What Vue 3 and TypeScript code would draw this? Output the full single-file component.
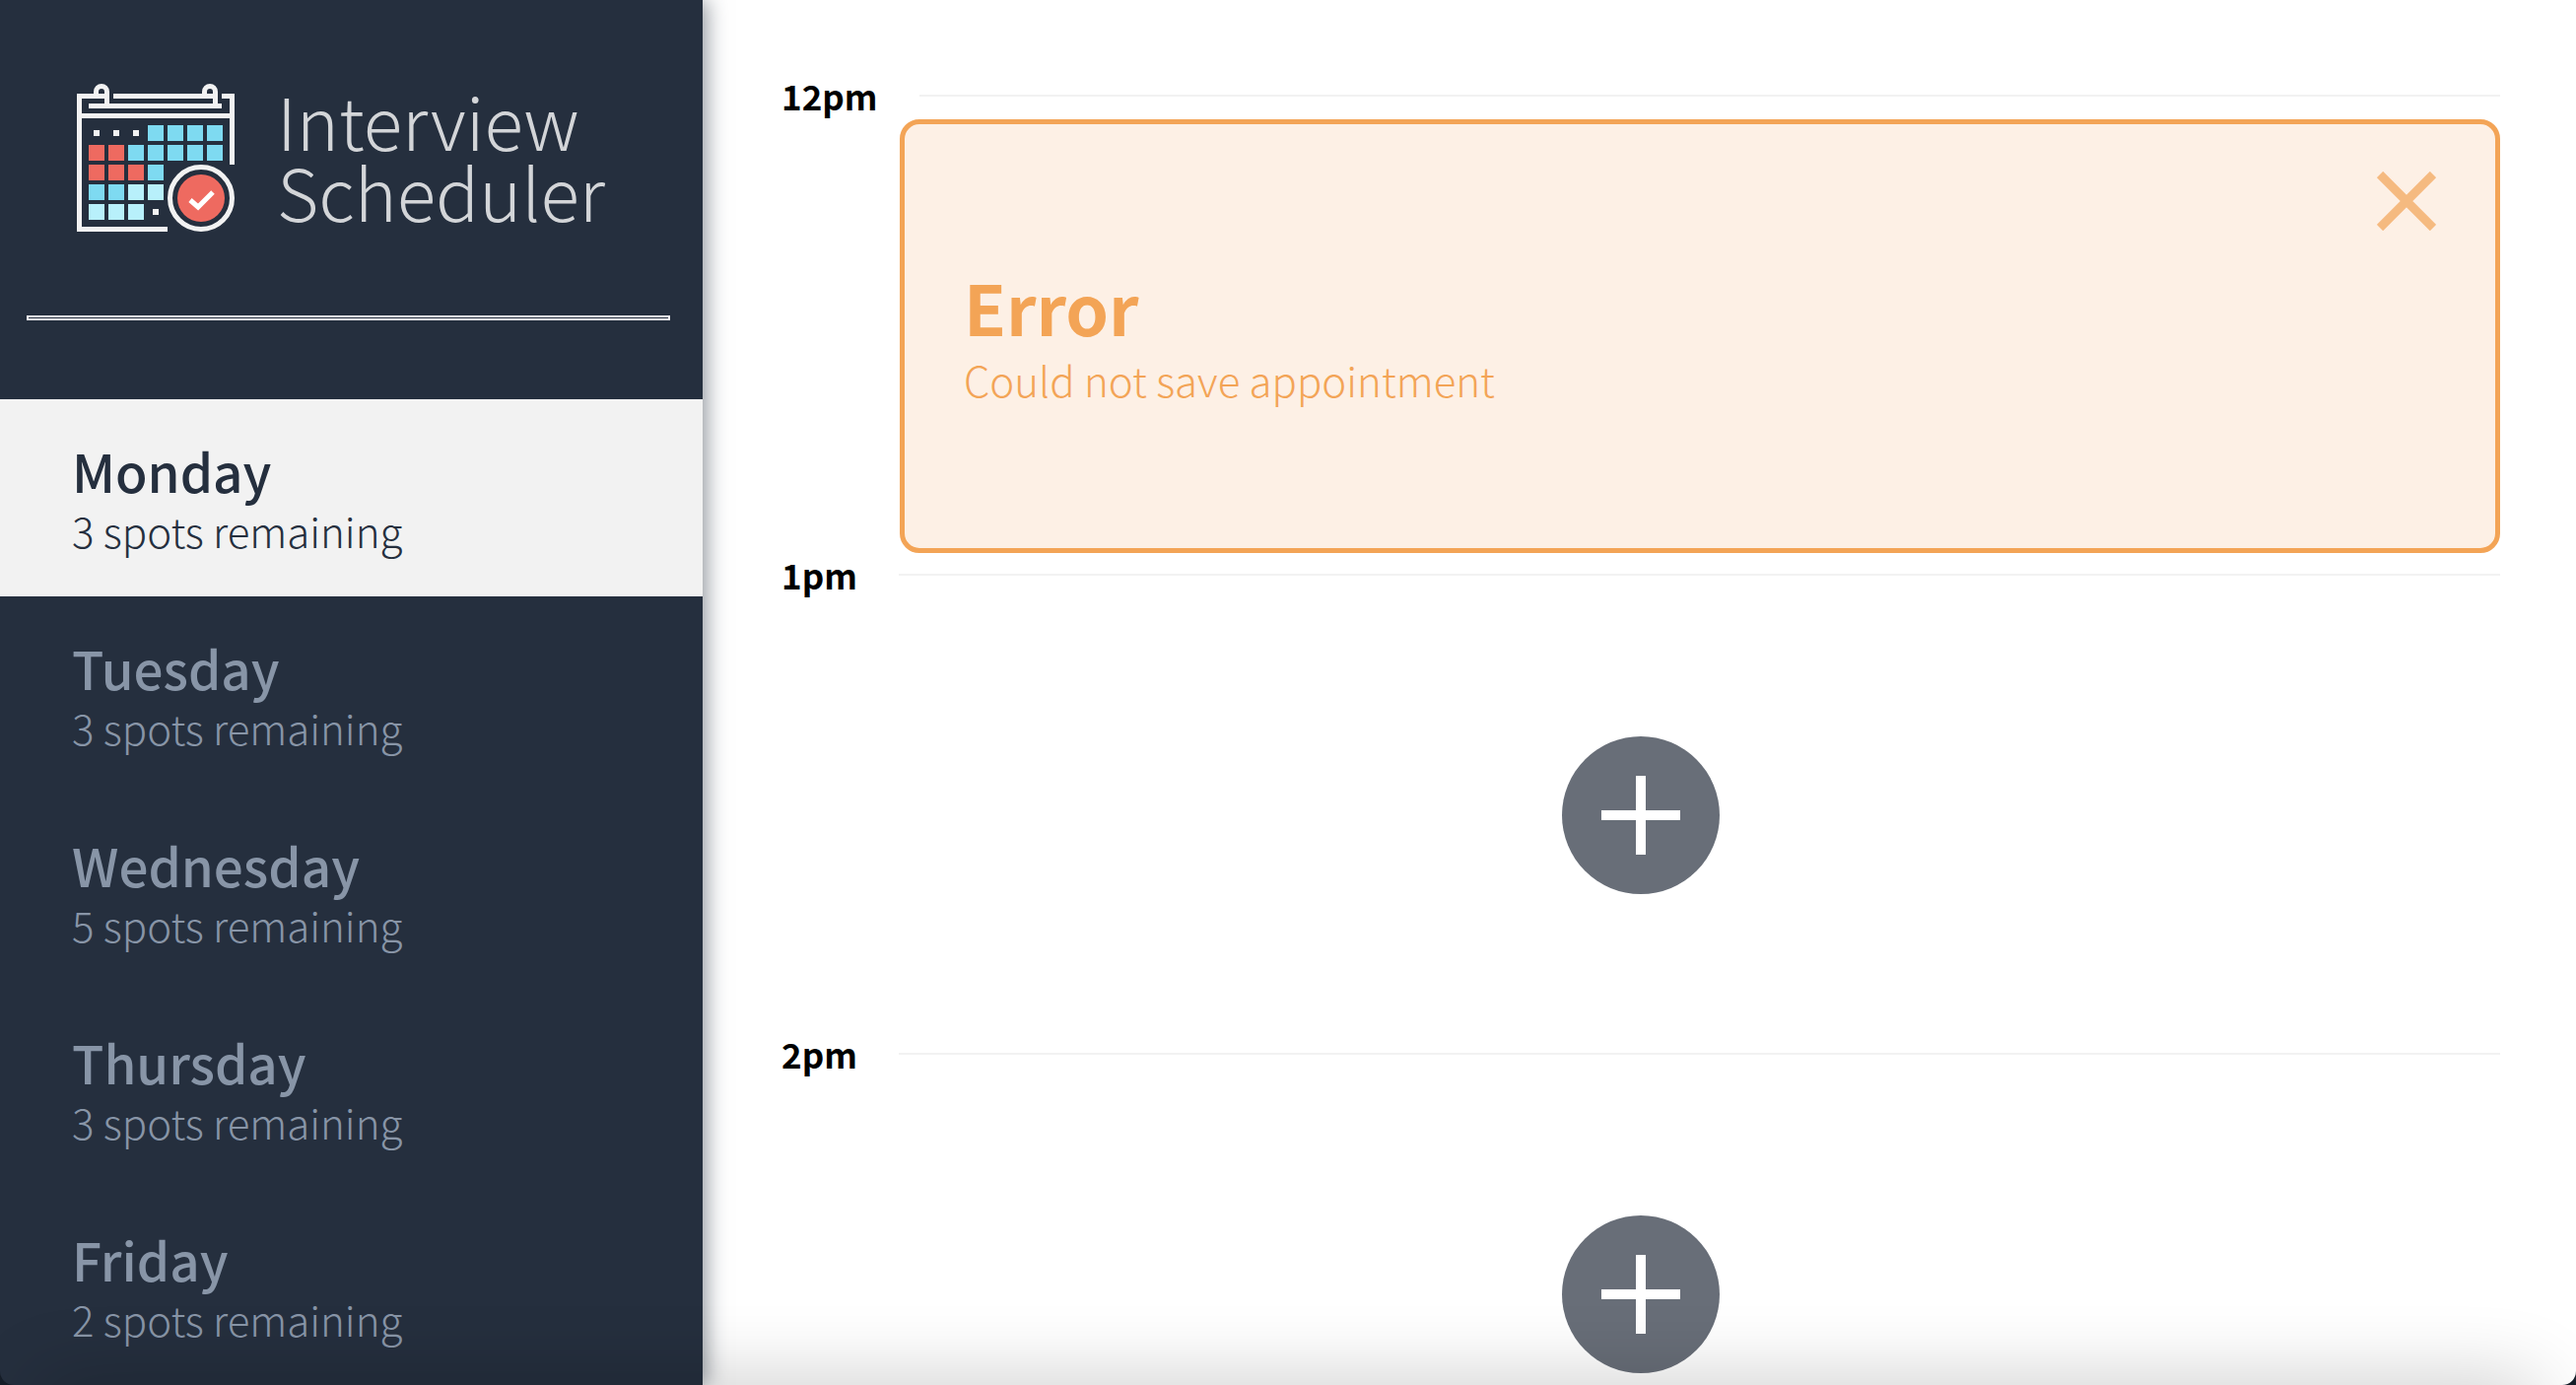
<script setup lang="ts">
import { ref } from 'vue'

interface Day {
  name: string
  spots: number
}

interface Slot {
  time: string
  error: boolean
}

const days: Day[] = [
  { name: 'Monday', spots: 3 },
  { name: 'Tuesday', spots: 3 },
  { name: 'Wednesday', spots: 5 },
  { name: 'Thursday', spots: 3 },
  { name: 'Friday', spots: 2 },
]
const selected = ref('Monday')

const slots = ref<Slot[]>([
  { time: '12pm', error: true },
  { time: '1pm', error: false },
  { time: '2pm', error: false },
])

// Calendar squares of the logo: column, row, tint
const cells: [number, number, string][] = [
  [3, 0, 'sky'], [4, 0, 'sky'], [5, 0, 'sky'], [6, 0, 'sky'],
  [0, 1, 'red'], [1, 1, 'red'], [2, 1, 'sky'], [3, 1, 'sky'], [4, 1, 'sky'], [5, 1, 'sky'], [6, 1, 'sky'],
  [0, 2, 'red'], [1, 2, 'red'], [2, 2, 'red'], [3, 2, 'sky'],
  [0, 3, 'sky'], [1, 3, 'sky'], [2, 3, 'pale'], [3, 3, 'pale'],
  [0, 4, 'pale'], [1, 4, 'pale'], [2, 4, 'pale'],
]
</script>

<template>
  <div class="layout">
    <aside class="sidebar">
      <div class="brand">
        <svg class="brand-icon" viewBox="0 0 160 150" aria-hidden="true">
          <g fill="none" stroke="#f2f2f2" stroke-width="5">
            <path d="M92 147.500H2.500V12.500H20M37 12.500H130M147 12.500H157.500V82" />
            <path d="M12 22.500H147M5 32.500H155" />
            <path d="M30 12.500H19.500V8a5.500 5.500 0 0 1 11 0V22" />
            <path d="M140 12.500H129.500V8a5.500 5.500 0 0 1 11 0V22" />
            <circle cx="126" cy="116" r="31.500" />
          </g>
          <rect
            v-for="[col, row, tint] in cells"
            :key="`${col}-${row}`"
            :class="tint"
            :x="12 + col * 20"
            :y="42 + row * 20"
            width="16"
            height="16"
          />
          <path fill="#f2f2f2" d="M17 47h6v6h-6zM37 47h6v6h-6zM57 47h6v6h-6zM77 127h6v6h-6z" />
          <circle class="red" cx="126" cy="116" r="24" />
          <path d="M115 118l8 7 15-15" fill="none" stroke="#fff" stroke-width="5" />
        </svg>
        <h1 class="brand-name">Interview<br />Scheduler</h1>
      </div>
      <hr class="separator" />
      <nav>
        <ul class="days">
          <li v-for="day in days" :key="day.name">
            <button
              type="button"
              class="day"
              :class="{ selected: day.name === selected }"
              @click="selected = day.name"
            >
              <span class="day-name">{{ day.name }}</span>
              <span class="day-spots">{{ day.spots }} spots remaining</span>
            </button>
          </li>
        </ul>
      </nav>
    </aside>

    <main class="schedule">
      <article v-for="slot in slots" :key="slot.time" class="slot">
        <header class="slot-header">
          <h2 class="slot-time">{{ slot.time }}</h2>
          <hr class="slot-line" />
        </header>
        <section v-if="slot.error" class="card" role="alert">
          <div class="card-text">
            <h3 class="card-title">Error</h3>
            <p class="card-message">Could not save appointment</p>
          </div>
          <button type="button" class="close" aria-label="Close" @click="slot.error = false">
            <svg viewBox="0 0 60 60" aria-hidden="true">
              <path d="M3 3L57 57M57 3L3 57" stroke="#f3a456" stroke-width="9" />
            </svg>
          </button>
        </section>
        <div v-else class="empty">
          <button type="button" class="add" aria-label="Add appointment">
            <svg viewBox="0 0 160 160" aria-hidden="true">
              <circle cx="80" cy="80" r="80" fill="#686e78" />
              <path d="M80 40v80M40 80h80" stroke="#fff" stroke-width="10" />
            </svg>
          </button>
        </div>
      </article>
    </main>
    <div class="bottom-shade"></div>
    <div class="window-corners"></div>
  </div>
</template>

<style>
body {
  margin: 0;
  background: #fff;
}
</style>

<style scoped>
.layout {
  display: flex;
  height: 100vh;
  overflow: hidden;
  font-family: 'Noto Sans CJK SC', 'Noto Sans', sans-serif;
}

h1,
h2,
h3,
p,
ul {
  margin: 0;
  padding: 0;
}

button {
  border: 0;
  padding: 0;
  background: none;
  font: inherit;
  cursor: pointer;
}

svg {
  display: block;
}

.sidebar {
  flex: 0 0 713px;
  box-sizing: border-box;
  padding-top: 85px;
  background: #252f3e;
  box-shadow: 4px 0 20px rgba(37, 47, 62, 0.5);
  z-index: 1;
}

.brand {
  display: flex;
  align-items: flex-start;
  gap: 43px;
  height: 150px;
  padding-left: 78px;
}

.brand-icon {
  width: 160px;
  height: 150px;
}

.brand-name {
  color: #d3d5d8;
  font-size: 73px;
  font-weight: 200;
  line-height: 72px;
}

.sky {
  fill: #7edaf1;
}

.pale {
  fill: #b8f0fb;
}

.red {
  fill: #ee6a60;
}

.separator {
  height: 1px;
  margin: 85px 33px 80px 27px;
  border: 2px solid #f5f2f5;
}

.days {
  list-style: none;
}

.day {
  display: flex;
  flex-direction: column;
  justify-content: center;
  width: 100%;
  height: 200px;
  padding: 0 73px;
  color: #8895a7;
  text-align: left;
}

.day.selected {
  background: #f2f2f2;
  color: #252f3e;
}

.day-name {
  font-size: 53px;
  font-weight: 500;
  line-height: 66px;
}

.day-spots {
  font-size: 42px;
  font-weight: 300;
  line-height: 56px;
}

.schedule {
  flex: 1;
  padding: 75px 77px 0 80px;
  overflow-y: auto;
  scrollbar-width: none;
}

.slot-header {
  display: flex;
  align-items: center;
  gap: 42px;
  height: 44px;
  margin-bottom: 2px;
}

.slot-time {
  color: #000;
  font-size: 35px;
  font-weight: 700;
  line-height: 44px;
}

.slot-line {
  flex: 1;
  height: 2px;
  margin: 0;
  border: 0;
  background: #f2f2f2;
}

.card {
  display: flex;
  box-sizing: border-box;
  height: 440px;
  margin-left: 120px;
  padding: 48px 60px;
  border: 5px solid #f3a456;
  border-radius: 20px;
  background: #fdf0e5;
}

.card-text {
  flex: 1;
  align-self: center;
  color: #f3a456;
}

.card-title {
  font-size: 70px;
  font-weight: 700;
  line-height: 88px;
}

.card-message {
  font-size: 42px;
  font-weight: 300;
  line-height: 60px;
}

.close {
  align-self: flex-start;
  width: 60px;
  height: 60px;
  opacity: 0.7;
}

.empty {
  display: flex;
  align-items: center;
  justify-content: center;
  height: 440px;
}

.add {
  width: 160px;
  height: 160px;
}

.bottom-shade {
  position: fixed;
  right: 40px;
  bottom: -60px;
  left: 40px;
  z-index: 2;
  height: 60px;
  box-shadow: 0 0 80px rgba(0, 0, 0, 0.24);
  pointer-events: none;
}

.window-corners {
  position: fixed;
  inset: 0;
  z-index: 3;
  border-radius: 0 0 14px 14px;
  box-shadow: 0 0 0 20px #151d28;
  pointer-events: none;
}
</style>
